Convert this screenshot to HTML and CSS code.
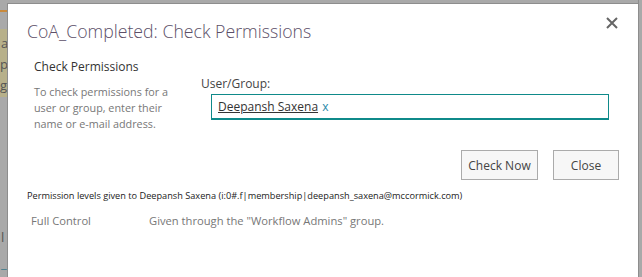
FILE: index.html
```html
<!DOCTYPE html>
<html lang="en">
<head>
  <meta charset="UTF-8">
  <title>Check Permissions</title>
  <link rel="stylesheet" href="styles.css">
</head>
<body>
  <!-- page behind the dialog, greyed out -->
  <div class="backdrop">
    <div class="backdrop-line"></div>
    <div class="backdrop-note">a<br>p<br>g</div>
    <div class="backdrop-text">l</div>
    <div class="backdrop-link">_</div>
  </div>

  <!-- Dialog -->
  <div class="dialog">
    <div class="dialog-head">
      <h1 class="dialog-title">CoA_Completed: Check Permissions</h1>
      <button class="close-x" aria-label="Close">
        <svg width="12" height="12" viewBox="0 0 12 12">
          <path d="M1 1 L11 11 M11 1 L1 11" stroke="#666" stroke-width="2"/>
        </svg>
      </button>
    </div>

    <div class="check-row">
      <div class="check-info">
        <h2>Check Permissions</h2>
        <p>To check permissions for a user or group, enter their name or e-mail address.</p>
      </div>
      <div class="check-field">
        <label>User/Group:</label>
        <div class="people-box">
          <span class="person">Deepansh Saxena</span>
          <span class="remove">x</span>
        </div>
      </div>
    </div>

    <div class="actions">
      <button class="btn btn-check">Check Now</button>
      <button class="btn btn-close">Close</button>
    </div>

    <div class="result-title">Permission levels given to Deepansh Saxena (i:0#.f|membership|deepansh_saxena@mccormick.com)</div>
    <div class="result-row">
      <span class="level">Full Control</span>
      <span class="reason">Given through the "Workflow Admins" group.</span>
    </div>
  </div>

  <div class="backdrop-right"></div>
</body>
</html>
```

FILE: styles.css
```css
/* Global */
body {
  margin: 0;
  padding: 0;
  height: 277px;
  overflow: hidden;
  display: flex;
  background-color: #a9a9a9;
  font-family: 'Open Sans', sans-serif;
}

/* Greyed page on the left */
.backdrop {
  width: 7px;
  flex-shrink: 0;
  overflow: hidden;
  font-size: 13px;
  color: #555;
}

.backdrop-line {
  margin-top: 10px;
  height: 2px;
  background-color: #c98a3c;
}

.backdrop-note {
  margin-top: 17px;
  height: 68px;
  background-color: #b7b08a;
  line-height: 21px;
  padding-top: 4px;
  box-sizing: border-box;
  text-indent: 1px;
}

.backdrop-text {
  margin-top: 131px;
  padding-left: 1px;
}

.backdrop-link {
  margin-top: 8px;
  padding-left: 1px;
  color: #3a7a8a;
}

.backdrop-right {
  width: 3px;
  flex-shrink: 0;
  border-left: 1px solid #8d8d8d;
}

/* Dialog */
.dialog {
  flex: 1;
  margin-top: 3px;
  background-color: white;
  border-left: 1px solid #8d8d8d;
  border-top: 1px solid #8d8d8d;
  padding: 0 0 0 19px;
}

.dialog-head {
  display: flex;
  justify-content: space-between;
  align-items: flex-start;
  height: 54px;
}

.dialog-title {
  margin: 15px 0 0 0;
  font-size: 17.7px;
  font-weight: 300;
  color: #5c4f68;
}

.close-x {
  background: none;
  border: none;
  padding: 0;
  margin: 13px 20px 0 0;
  width: 12px;
  height: 12px;
  cursor: pointer;
}

.close-x svg {
  display: block;
}

/* Check section */
.check-row {
  display: flex;
  padding-left: 7px;
}

.check-info {
  width: 167px;
}

.check-info h2 {
  margin: 0;
  font-size: 12px;
  font-weight: normal;
  color: #333;
  line-height: 17px;
}

.check-info p {
  margin: 9px 0 0 0;
  width: 142px;
  font-size: 10.8px;
  line-height: 16px;
  color: #777;
}

.check-field {
  flex: 1;
  padding-top: 17px;
}

.check-field label {
  display: block;
  font-size: 12px;
  color: #444;
  line-height: 17px;
}

.people-box {
  margin: 2px 29px 0 10px;
  height: 26px;
  border: 1px solid #0f8a8a;
  border-width: 1px 1px 2px 1px;
  box-sizing: border-box;
  padding-left: 6px;
  font-size: 12px;
  line-height: 23px;
}

.person {
  color: #333;
  text-decoration: underline;
}

.remove {
  color: #2a8aa8;
  margin-left: 1px;
}

/* Buttons */
.actions {
  display: flex;
  justify-content: flex-end;
  gap: 15px;
  padding-right: 19px;
  margin-top: 18px;
}

.btn {
  height: 30px;
  padding: 0;
  background-color: #f7f7f7;
  border: 1px solid #ababab;
  font-family: 'Open Sans', sans-serif;
  font-size: 12px;
  color: #444;
}

.btn-check {
  width: 77px;
}

.btn-close {
  width: 66px;
}

/* Result */
.result-title {
  margin-top: 9px;
  font-size: 9.2px;
  color: #222;
}

.result-row {
  display: flex;
  margin-top: 11px;
  padding-left: 4px;
  font-size: 11.2px;
  color: #777;
}

.level {
  width: 118px;
}
```
